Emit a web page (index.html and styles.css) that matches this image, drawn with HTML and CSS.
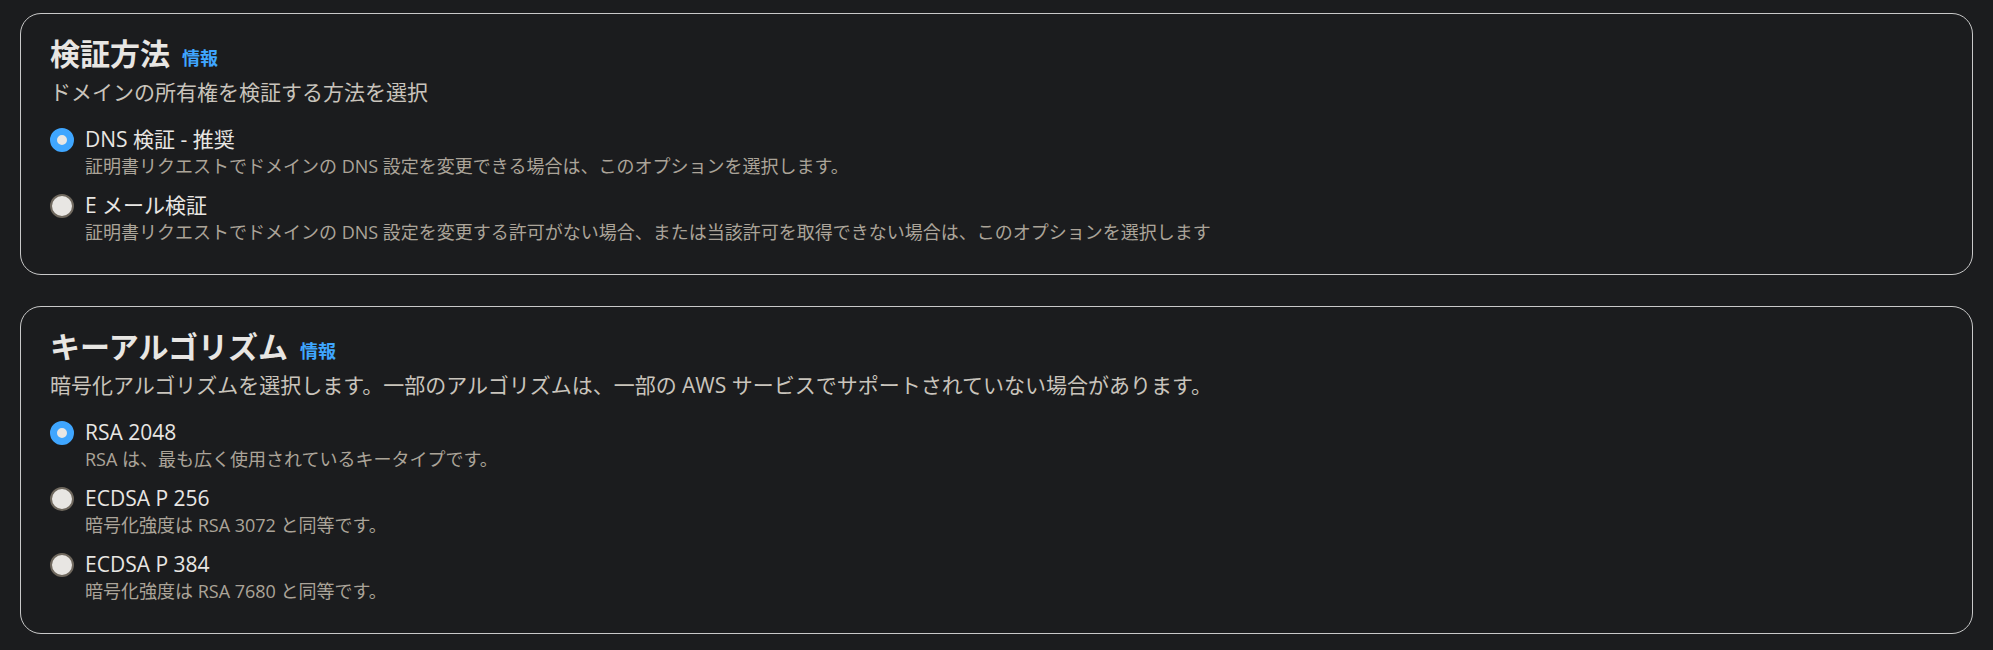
FILE: index.html
```html
<!DOCTYPE html>
<html lang="ja">
<head>
<meta charset="utf-8">
<title>証明書リクエスト</title>
<link rel="stylesheet" href="styles.css">
</head>
<body>
<main class="page">
  <section class="card">
    <div class="card-head">
      <h2 class="card-title">検証方法</h2>
      <a class="info-link" href="#">情報</a>
    </div>
    <p class="card-desc">ドメインの所有権を検証する方法を選択</p>
    <div class="radio-group">
      <label class="radio">
        <input class="radio-input" type="radio" name="validation" checked>
        <span class="radio-text">
          <span class="radio-label">DNS 検証 - 推奨</span>
          <span class="radio-desc">証明書リクエストでドメインの DNS 設定を変更できる場合は、このオプションを選択します。</span>
        </span>
      </label>
      <label class="radio">
        <input class="radio-input" type="radio" name="validation">
        <span class="radio-text">
          <span class="radio-label">E メール検証</span>
          <span class="radio-desc">証明書リクエストでドメインの DNS 設定を変更する許可がない場合、または当該許可を取得できない場合は、このオプションを選択します</span>
        </span>
      </label>
    </div>
  </section>

  <section class="card">
    <div class="card-head">
      <h2 class="card-title">キーアルゴリズム</h2>
      <a class="info-link" href="#">情報</a>
    </div>
    <p class="card-desc">暗号化アルゴリズムを選択します。一部のアルゴリズムは、一部の AWS サービスでサポートされていない場合があります。</p>
    <div class="radio-group">
      <label class="radio">
        <input class="radio-input" type="radio" name="algo" checked>
        <span class="radio-text">
          <span class="radio-label">RSA 2048</span>
          <span class="radio-desc">RSA は、最も広く使用されているキータイプです。</span>
        </span>
      </label>
      <label class="radio">
        <input class="radio-input" type="radio" name="algo">
        <span class="radio-text">
          <span class="radio-label">ECDSA P 256</span>
          <span class="radio-desc">暗号化強度は RSA 3072 と同等です。</span>
        </span>
      </label>
      <label class="radio">
        <input class="radio-input" type="radio" name="algo">
        <span class="radio-text">
          <span class="radio-label">ECDSA P 384</span>
          <span class="radio-desc">暗号化強度は RSA 7680 と同等です。</span>
        </span>
      </label>
    </div>
  </section>
</main>
</body>
</html>
```

FILE: styles.css
```css
* {
  box-sizing: border-box;
}

html, body {
  margin: 0;
  padding: 0;
  background: #1b1c1e;
}

body {
  font-family: "Open Sans", "Noto Sans CJK JP", sans-serif;
  color: #e8e6e3;
}

.page {
  display: flex;
  flex-direction: column;
  gap: 31px;
  padding: 13px 20px 0 20px;
}

.card {
  border: 1px solid #c9c9c9;
  border-radius: 21px;
  padding: 22px 29px 32px 29px;
}

.card-head {
  display: flex;
  align-items: baseline;
  gap: 12px;
}

.card-title {
  margin: 0;
  font-size: 30px;
  line-height: 36px;
  font-weight: 700;
  color: #e8e6e3;
}

.info-link {
  font-size: 18px;
  font-weight: 700;
  color: #3fa6ff;
  text-decoration: none;
}

.card-desc {
  margin: 5px 0 0 0;
  font-size: 21px;
  line-height: 30px;
  color: #c9c4bc;
}

.radio-group {
  display: flex;
  flex-direction: column;
  gap: 13px;
  margin-top: 16px;
}

.radio {
  display: flex;
  align-items: flex-start;
  gap: 11px;
  cursor: pointer;
}

.radio-input {
  appearance: none;
  -webkit-appearance: none;
  margin: 4.5px 0 0 0;
  width: 24px;
  height: 24px;
  flex: none;
  border-radius: 50%;
  background: #e8e6e3;
  border: 2px solid #6f685e;
}

.radio-input:checked {
  border: 7.5px solid #3fa6ff;
  background: #e8e6e3;
}

.radio-text {
  display: flex;
  flex-direction: column;
}

.radio-label {
  font-size: 21px;
  line-height: 33px;
  color: #e8e6e3;
}

.radio-desc {
  font-size: 18px;
  line-height: 20px;
  color: #aba499;
}
```
